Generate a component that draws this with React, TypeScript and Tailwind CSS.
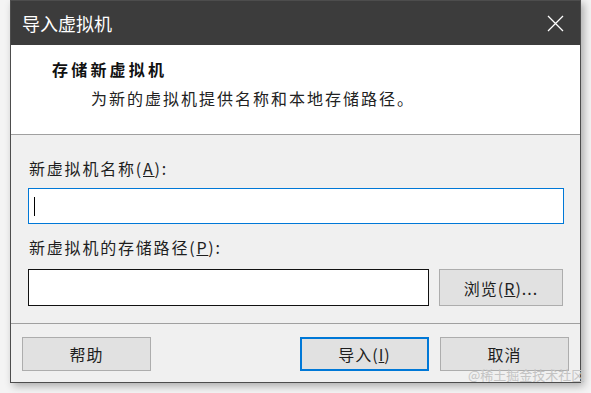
import React from "react";

const font = { fontFamily: '"Segoe UI", "Noto Sans CJK SC", "Noto Sans", sans-serif' };

function CloseIcon() {
  return (
    <svg width="17" height="17" viewBox="0 0 17 17" className="block">
      <path d="M1 1 L16 16 M16 1 L1 16" stroke="#ffffff" strokeWidth="1.3" fill="none" />
    </svg>
  );
}

function Button({ children, primary, className }: { children: React.ReactNode; primary?: boolean; className?: string }) {
  return (
    <button
      className={`flex items-center justify-center bg-[#e1e1e1] text-[16px] text-[#1e1e1e] tracking-[1px] ${
        primary ? "border-2 border-[#0078d7]" : "border border-[#adadad]"
      } ${className ?? ""}`}
    >
      {children}
    </button>
  );
}

export default function App() {
  return (
    <div className="relative w-[591px] h-[393px] bg-[#f4f4f4] overflow-hidden" style={font}>
      <div className="ml-[10px] w-[571px] h-[383px] flex flex-col border border-[#4d4d4d] bg-[#f0f0f0] shadow-[3px_3px_8px_rgba(0,0,0,0.3)]">
        {/* title bar */}
        <div className="h-[44px] shrink-0 bg-[#3c3c3c] flex items-center justify-between pl-[11px] pr-[16px]">
          <span className="text-[18px] text-white leading-none">导入虚拟机</span>
          <CloseIcon />
        </div>

        {/* header */}
        <div className="h-[90px] shrink-0 bg-white border-b border-[#a0a0a0] pt-[13px]">
          <div className="pl-[41px] text-[16px] font-bold tracking-[3.2px] text-[#111] leading-[22px]">存储新虚拟机</div>
          <div className="pl-[80px] mt-[7px] text-[16px] tracking-[2px] text-[#222] leading-[22px]">
            为新的虚拟机提供名称和本地存储路径。
          </div>
        </div>

        {/* form */}
        <div className="flex-1 flex flex-col px-[17px] pt-[23px] border-b border-[#a0a0a0]">
          <div className="pl-[1px] text-[16px] tracking-[1.8px] leading-[20px] text-[#1e1e1e]">
            新虚拟机名称(<u>A</u>):
          </div>
          <div className="mt-[10px] h-[36px] w-[536px] bg-white border border-[#0078d7] flex items-center pl-[5px]">
            <div className="w-[1px] h-[19px] bg-black" />
          </div>
          <div className="mt-[13px] pl-[1px] text-[16px] tracking-[1.8px] leading-[20px] text-[#1e1e1e]">
            新虚拟机的存储路径(<u>P</u>):
          </div>
          <div className="mt-[12px] flex gap-[10px]">
            <div className="h-[37px] w-[401px] bg-white border border-[#111]" />
            <Button className="h-[37px] w-[124px]">
              浏览(<u>R</u>)...
            </Button>
          </div>
        </div>

        {/* buttons */}
        <div className="h-[58px] shrink-0 flex items-start pt-[13px] pl-[11px]">
          <Button className="h-[34px] w-[129px]">帮助</Button>
          <Button primary className="ml-[149px] h-[34px] w-[129px]">
            导入(<u>I</u>)
          </Button>
          <Button className="ml-[11px] h-[34px] w-[129px]">取消</Button>
        </div>
      </div>

      <div className="absolute left-[468px] top-[367px] text-[13px] leading-[16px] text-[#c4c4c4]">@稀土掘金技术社区</div>
    </div>
  );
}
